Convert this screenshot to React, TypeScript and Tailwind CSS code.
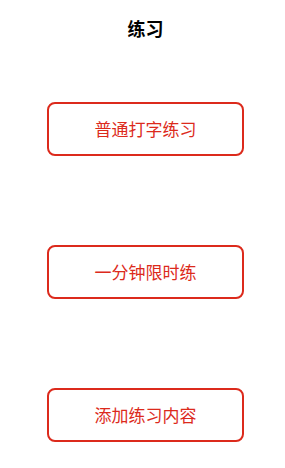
export default function App() {
  const items = ['普通打字练习', '一分钟限时练', '添加练习内容'];

  return (
    <div
      className="w-[285px] h-[468px] bg-white flex flex-col items-center pl-[6px]"
      style={{ fontFamily: '"Noto Sans CJK SC", "Noto Sans", sans-serif' }}
    >
      <div className="h-[56px] flex items-center justify-center text-[18px] font-bold text-black">
        练习
      </div>
      <div className="mt-[46px] flex flex-col gap-[89px]">
        {items.map((label) => (
          <button
            key={label}
            className="w-[197px] h-[54px] border-2 border-[#dc2a1c] rounded-[8px] text-[#dc2a1c] text-[17px] flex items-center justify-center"
          >
            {label}
          </button>
        ))}
      </div>
    </div>
  );
}
